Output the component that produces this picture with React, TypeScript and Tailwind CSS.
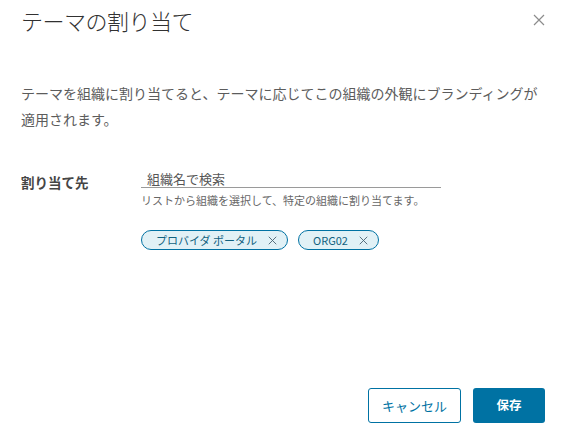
import React from 'react';

const XIcon = ({ size = 12, className = '' }: { size?: number; className?: string }) => (
  <svg width={size} height={size} viewBox="0 0 12 12" className={className} fill="none" stroke="currentColor" strokeWidth={1.2}>
    <path d="M1 1L11 11M11 1L1 11" />
  </svg>
);

const Chip = ({ label }: { label: string }) => (
  <span className="inline-flex items-center h-[20px] pl-[14px] pr-[10px] rounded-full border border-[#0072a3] bg-[#e1f1f6] text-[#11617f] text-[11px] leading-none">
    <span>{label}</span>
    <XIcon size={9} className="ml-[11px] text-[#4a6373]" />
  </span>
);

export default function App() {
  return (
    <div className="w-[566px] h-[437px] bg-white flex flex-col px-[21px] font-['Noto_Sans_CJK_JP','Noto_Sans',sans-serif]">
      {/* Header */}
      <div className="flex items-center justify-between pt-[6px]">
        <h1 className="text-[22px] leading-[28px] font-light text-[#313131] tracking-[-0.5px]">テーマの割り当て</h1>
        <button className="text-[#8c8c8c]"><XIcon size={12} /></button>
      </div>

      {/* Description */}
      <p className="mt-[46px] text-[14px] leading-[26px] text-[#5c5c5c]">
        テーマを組織に割り当てると、テーマに応じてこの組織の外観にブランディングが適用されます。
      </p>

      {/* Form row */}
      <div className="mt-[38px] flex">
        <label className="w-[120px] pt-[2px] text-[13.5px] leading-[20px] font-bold text-[#454545]">割り当て先</label>
        <div className="flex flex-col">
          <input
            placeholder="組織名で検索"
            className="w-[300px] h-[18px] pl-[6px] border-b border-[#9a9a9a] text-[13px] leading-[18px] text-[#565656] placeholder:text-[#565656] outline-none"
          />
          <span className="mt-[4px] text-[11px] leading-[16px] text-[#666666]">リストから組織を選択して、特定の組織に割り当てます。</span>
          <div className="mt-[22px] flex gap-[10px]">
            <Chip label="プロバイダ ポータル" />
            <Chip label="ORG02" />
          </div>
        </div>
      </div>

      {/* Footer */}
      <div className="mt-auto pb-[14px] flex justify-end gap-[12px]">
        <button className="w-[93px] h-[35px] rounded-[3px] border border-[#0072a3] text-[#0072a3] text-[13px]">キャンセル</button>
        <button className="w-[72px] h-[35px] rounded-[3px] bg-[#0072a3] text-white text-[12.5px] font-bold">保存</button>
      </div>
    </div>
  );
}
